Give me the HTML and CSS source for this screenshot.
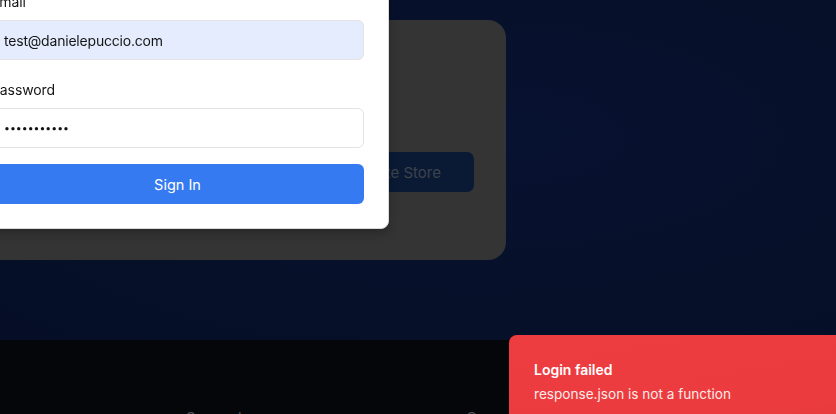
FILE: index.html
```html
<!DOCTYPE html>
<html lang="en">
<head>
<meta charset="utf-8">
<title>Sign In</title>
<link rel="stylesheet" href="styles.css">
</head>
<body>
<div class="page">
  <main class="hero">
    <section class="card">
      <div class="card-actions">
        <button class="store-btn">Visualize Store</button>
      </div>
    </section>
  </main>
  <footer class="footer">
    <div class="footer-col">Support</div>
    <div class="footer-col">Company</div>
  </footer>
</div>

<div class="modal" role="dialog">
  <form class="form">
    <div class="field">
      <label class="label" for="email">Email</label>
      <input class="input input-autofill" id="email" type="email" value="test@danielepuccio.com">
    </div>
    <div class="field">
      <label class="label" for="password">Password</label>
      <input class="input input-password" id="password" type="password" value="secretpass1">
    </div>
    <button type="button" class="signin">Sign In</button>
  </form>
</div>

<div class="toast" role="status">
  <div class="toast-title">Login failed</div>
  <div class="toast-desc">response.json is not a function</div>
</div>
</body>
</html>
```

FILE: styles.css
```css
* { box-sizing: border-box; }

html, body {
  margin: 0;
  padding: 0;
  width: 836px;
  height: 414px;
  overflow: hidden;
  font-family: Inter, "Noto Sans", "Liberation Sans", sans-serif;
}

.page {
  display: flex;
  flex-direction: column;
}

.hero {
  height: 340px;
  background: radial-gradient(ellipse at 60% 40%, #071231 0%, #061029 60%, #050e26 100%);
  display: flex;
  justify-content: flex-end;
  align-items: flex-start;
  padding: 20px 330px 0 0;
}

.card {
  flex: 0 0 720px;
  height: 240px;
  background: #343434;
  border-radius: 18px;
  display: flex;
  flex-direction: column;
  justify-content: flex-start;
  padding: 132px 32px 0 32px;
}

.card-actions {
  display: flex;
  justify-content: flex-end;
}

.store-btn {
  height: 40px;
  padding: 0 33px;
  border: none;
  border-radius: 7px;
  background: #0a1a35;
  color: #3e434c;
  font-family: inherit;
  font-size: 15px;
}

.footer {
  height: 74px;
  background: #050609;
  display: grid;
  grid-template-columns: 186px 280px 1fr;
  padding-top: 68px;
  color: #50535a;
  font-size: 15px;
  line-height: 20px;
}

.footer-col:first-child { grid-column: 2; }
.footer-col:last-child { grid-column: 3; }

.modal {
  position: fixed;
  left: -33px;
  top: -32px;
  width: 422px;
  background: #ffffff;
  border-radius: 8px;
  border: 1px solid #d9d9d9;
  box-shadow: 0 4px 10px rgba(0, 0, 0, 0.25);
  padding: 23px 24px 24px 23px;
}

.form {
  display: flex;
  flex-direction: column;
}

.field {
  display: flex;
  flex-direction: column;
  gap: 9px;
  margin-bottom: 20px;
}

.field + .field { margin-bottom: 16px; }

.label {
  font-size: 14px;
  line-height: 19px;
  color: #151515;
  letter-spacing: -0.1px;
}

.input {
  height: 40px;
  border: 1px solid #e3e3e5;
  border-radius: 6px;
  padding: 0 12px;
  font-family: inherit;
  font-size: 14px;
  letter-spacing: -0.2px;
  color: #161616;
  background: #ffffff;
  outline: none;
}

.input-autofill {
  background: #e4ecfd;
}

.input-password {
  font-size: 10.5px;
  letter-spacing: 0;
  color: #111111;
}

.signin {
  height: 40px;
  border: none;
  border-radius: 6px;
  background: #357af1;
  color: #ffffff;
  font-family: inherit;
  font-size: 14.5px;
}

.toast {
  position: fixed;
  left: 509px;
  top: 335px;
  width: 356px;
  height: 100px;
  background: linear-gradient(170deg, #ee3d40 0%, #ec3b3e 70%, #e23a3d 100%);
  border-radius: 8px;
  padding: 25px 24px 24px 25px;
  color: #ffffff;
  font-size: 14px;
}

.toast-title {
  font-weight: 600;
  line-height: 20px;
}

.toast-desc {
  font-size: 13.6px;
  line-height: 20px;
  margin-top: 4px;
  opacity: 0.9;
}
```
